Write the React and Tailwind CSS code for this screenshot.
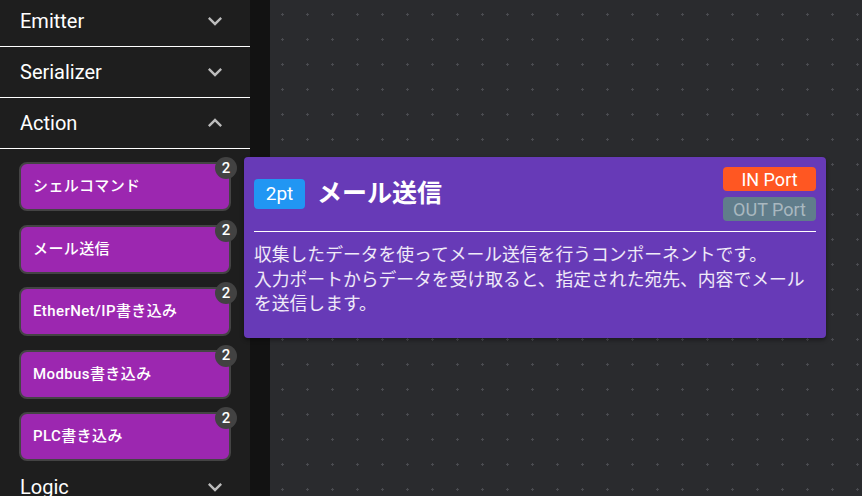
import React from "react";

const FONT = { fontFamily: 'Roboto, "Noto Sans CJK JP", sans-serif' };

function Chevron({ up }) {
  return (
    <svg width="28" height="28" viewBox="0 0 24 24" className="text-white/70" style={up ? { transform: "rotate(180deg)" } : undefined}>
      <path fill="currentColor" d="M16.59 8.59 12 13.17 7.41 8.59 6 10l6 6 6-6z" />
    </svg>
  );
}

function Header({ label, up, border = true }) {
  return (
    <div className={`flex items-center justify-between h-[51px] pl-[20px] pr-[21px] ${border ? "border-b border-white" : ""}`}>
      <span className="text-[20px] text-white">{label}</span>
      <Chevron up={up} />
    </div>
  );
}

function Item({ label }) {
  return (
    <div className="relative h-[49px] w-[212px] rounded-[8px] border-2 border-[#444444] bg-[#9c27b0] flex items-center pl-[12px]">
      <span className="text-[15px] font-medium tracking-[0.4px] text-white">{label}</span>
      <div className="absolute -top-[7px] -right-[8px] w-[22px] h-[22px] rounded-full bg-[#424242] flex items-center justify-center text-[15px] font-medium text-white">2</div>
    </div>
  );
}

export default function App() {
  const items = ["シェルコマンド", "メール送信", "EtherNet/IP書き込み", "Modbus書き込み", "PLC書き込み"];
  return (
    <div className="relative w-[862px] h-[496px] flex overflow-hidden bg-[#2a2b2e]" style={FONT}>
      <div className="w-[250px] h-full bg-[#1e1e1e] overflow-hidden">
        <div className="-mt-[4px]">
          <Header label="Emitter" />
          <Header label="Serializer" />
          <Header label="Action" up />
          <div className="pt-[13px] pl-[19px] flex flex-col gap-[13.5px]">
            {items.map((t) => (
              <Item key={t} label={t} />
            ))}
          </div>
          <Header label="Logic" border={false} />
        </div>
      </div>
      <div className="w-[20px] h-full bg-[#121212]" />
      <div className="flex-1 h-full relative">
        <svg className="absolute inset-0" width="100%" height="100%">
          <defs>
            <pattern id="dots" width="25" height="25" patternUnits="userSpaceOnUse">
              <rect x="11" y="14" width="3" height="1" fill="#4a4b50" />
              <rect x="12" y="13" width="1" height="3" fill="#4a4b50" />
            </pattern>
          </defs>
          <rect width="100%" height="100%" fill="url(#dots)" />
        </svg>
      </div>

      <div className="absolute left-[244px] top-[157px] w-[582px] h-[181px] rounded-[4px] bg-[#673ab7] px-[10px] pt-[10px] shadow-[0_2px_4px_rgba(0,0,0,0.4)]">
        <div className="flex items-center justify-between">
          <div className="flex items-center">
            <div className="h-[30px] w-[51px] rounded-[4px] bg-[#2196f3] flex items-center justify-center text-[19px] text-white">2pt</div>
            <div className="ml-[12px] text-[25px] font-bold text-white">メール送信</div>
          </div>
          <div className="flex flex-col gap-[6px]">
            <div className="h-[24px] w-[93px] rounded-[4px] bg-[#ff5722] flex items-center justify-center text-[18px] text-white">IN Port</div>
            <div className="h-[24px] w-[93px] rounded-[4px] bg-[#607d8b] flex items-center justify-center text-[18px] text-[#a9b8c0]">OUT Port</div>
          </div>
        </div>
        <div className="mt-[10px] h-px bg-white" />
        <p className="mt-[11px] text-[17.8px] leading-[24.5px] text-white/90">
          収集したデータを使ってメール送信を行うコンポーネントです。
          <br />
          入力ポートからデータを受け取ると、指定された宛先、内容でメールを送信します。
        </p>
      </div>
    </div>
  );
}
